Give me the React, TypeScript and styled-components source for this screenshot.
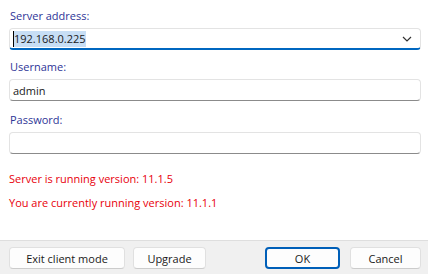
import React from "react";
import styled, { createGlobalStyle } from "styled-components";

const Global = createGlobalStyle`
  html, body { margin: 0; padding: 0; background: #ffffff; }
  body { font-family: "Segoe UI", "Open Sans", "Noto Sans", sans-serif; font-size: 11px; }
`;

const Dialog = styled.div`
  width: 428px;
  height: 274px;
  display: flex;
  flex-direction: column;
  background: #ffffff;
  overflow: hidden;
`;

const Body = styled.div`
  flex: 1;
  display: flex;
  flex-direction: column;
  padding: 8px 7px 0 9px;
`;

const Field = styled.div<{ $mb: number }>`
  display: flex;
  flex-direction: column;
  gap: 4px;
  margin-bottom: ${(p) => p.$mb}px;
`;

const Label = styled.label`
  color: #2e3597;
  font-size: 11px;
  line-height: 16px;
  height: 16px;
  padding-left: 1px;
`;

const InputBox = styled.div<{ $focused?: boolean }>`
  box-sizing: border-box;
  height: 22px;
  display: flex;
  align-items: center;
  padding: 0 8px 0 3px;
  border: 1px solid #e3e3e3;
  border-bottom: ${(p) => (p.$focused ? "2px solid #0067c0" : "1px solid #8b8b8b")};
  border-radius: 4px;
  background: #fff;
  color: #1a1a1a;
  font-size: 11px;
`;

const Selected = styled.span`
  background: #c7def5;
  color: #1a1a1a;
  border-left: 1px solid #000;
  line-height: 16px;
`;

const Spacer = styled.div`
  flex: 1;
`;

const Message = styled.div`
  color: #e8000b;
  font-size: 11px;
  line-height: 16px;
  margin-bottom: 8px;
`;

const Footer = styled.div`
  height: 34px;
  box-sizing: border-box;
  border-top: 1px solid #dedede;
  background: #f0f0f0;
  display: flex;
  align-items: flex-start;
  padding: 6px 7px 0 9px;
`;

const Button = styled.button<{ $w: number; $primary?: boolean; $ml?: number }>`
  box-sizing: border-box;
  width: ${(p) => p.$w}px;
  height: 22px;
  margin-left: ${(p) => p.$ml ?? 0}px;
  background: #fdfdfd;
  border: ${(p) => (p.$primary ? "2px solid #005fb8" : "1px solid #e0e0e0")};
  border-bottom-color: ${(p) => (p.$primary ? "#005fb8" : "#cccccc")};
  border-radius: 4px;
  font-family: inherit;
  font-size: 11px;
  color: #1a1a1a;
  padding: 0;
  display: flex;
  align-items: center;
  justify-content: center;
`;

export default function App() {
  return (
    <Dialog>
      <Global />
      <Body>
        <Field $mb={9}>
          <Label>Server address:</Label>
          <InputBox $focused>
            <Selected>192.168.0.225</Selected>
            <Spacer />
            <svg width="10" height="6" viewBox="0 0 10 6">
              <path d="M1 1 L5 5 L9 1" fill="none" stroke="#333" strokeWidth="1.2" />
            </svg>
          </InputBox>
        </Field>
        <Field $mb={11}>
          <Label>Username:</Label>
          <InputBox>admin</InputBox>
        </Field>
        <Field $mb={17}>
          <Label>Password:</Label>
          <InputBox />
        </Field>
        <Message>Server is running version: 11.1.5</Message>
        <Message>You are currently running version: 11.1.1</Message>
      </Body>
      <Footer>
        <Button $w={116}>Exit client mode</Button>
        <Button $w={73} $ml={8}>Upgrade</Button>
        <Spacer />
        <Button $w={75} $primary>OK</Button>
        <Button $w={71} $ml={10}>Cancel</Button>
      </Footer>
    </Dialog>
  );
}
